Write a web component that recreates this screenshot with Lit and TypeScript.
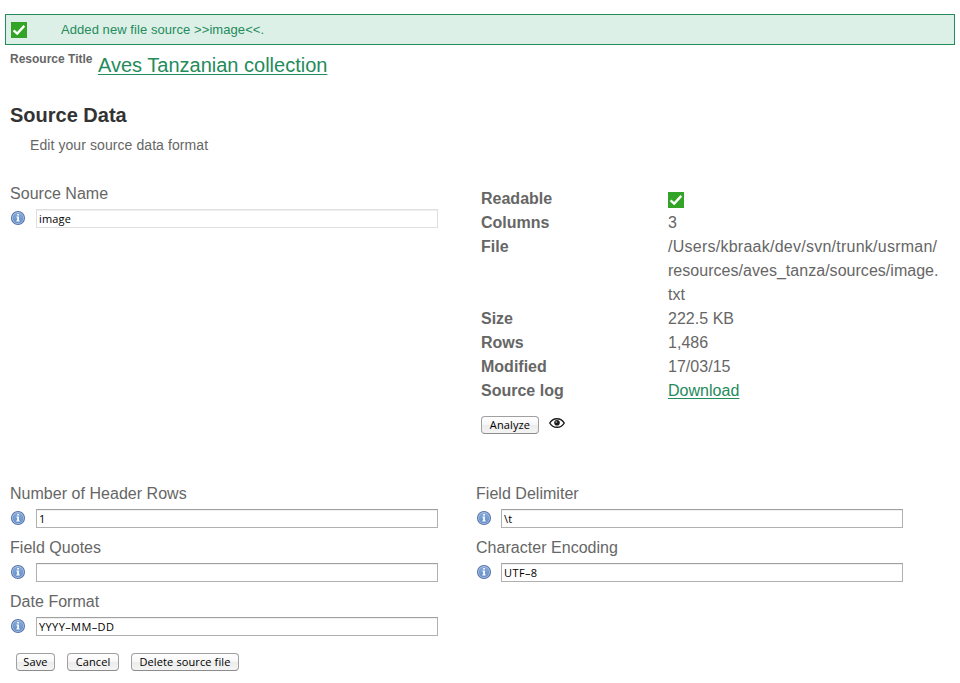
import { LitElement, html, css } from "lit";
import { customElement, property } from "lit/decorators.js";

@customElement("check-icon")
class CheckIcon extends LitElement {
  static styles = css`
    :host { display: block; width: 16px; height: 16px; flex: none; }
    svg { display: block; }
  `;
  render() {
    return html`<svg width="16" height="16" viewBox="0 0 16 16">
      <rect width="16" height="16" fill="#33a428" />
      <path d="M2.6 8.3 L6.2 11.6 L13.3 3.9" fill="none" stroke="#fff" stroke-width="2.3" />
    </svg>`;
  }
}

@customElement("info-icon")
class InfoIcon extends LitElement {
  static styles = css`
    :host { display: block; width: 16px; height: 16px; flex: none; }
    svg { display: block; }
  `;
  render() {
    return html`<svg width="16" height="16" viewBox="0 0 16 16">
      <defs>
        <linearGradient id="g" x1="0" y1="0" x2="0" y2="1">
          <stop offset="0" stop-color="#86a9d8" />
          <stop offset="1" stop-color="#6590cb" />
        </linearGradient>
      </defs>
      <circle cx="8" cy="8" r="6.5" fill="#b4c9e6" stroke="#5874ab" stroke-width="1.1" />
      <circle cx="8" cy="8" r="5.3" fill="url(#g)" />
      <path d="M7.2 4h1.7v1.5H7.2z M6.4 6.5h2.5v3.9h.8v1H6.3v-1h.9V7.5h-.8z" fill="#fff" />
    </svg>`;
  }
}

@customElement("form-field")
class FormField extends LitElement {
  @property() label = "";
  @property() value = "";
  @property({ type: Boolean }) muted = false;

  static styles = css`
    :host { display: block; height: 54px; --gap: 10px; }
    .label { display: block; font-size: 16px; line-height: 24px; color: #666; letter-spacing: .03px; }
    .row { display: flex; align-items: flex-start; gap: var(--field-gap, 10px); padding-top: 3px; }
    .icon { margin-top: 1px; }
    .box {
      box-sizing: border-box; width: 402px; height: 19px; margin: 0; padding: 0 2px 1px;
      border: 1px solid #b0b0b0; border-top-color: #a0a0a0; border-radius: 0; background: #fff;
      font: 500 11px/16px "Open Sans", "Noto Sans", sans-serif; letter-spacing: .18px; color: #000; outline: none;
      box-shadow: inset 0 1px 0 #f0f0f0;
    }
    .caps { letter-spacing: .4px; }
    .muted { border-color: #dfdfdf; }
  `;
  render() {
    const caps = this.value !== "" && this.value === this.value.toUpperCase();
    return html`
      <label class="label">${this.label}</label>
      <div class="row">
        <info-icon class="icon"></info-icon>
        <input class="box ${this.muted ? "muted" : ""} ${caps ? "caps" : ""}" .value=${this.value} />
      </div>`;
  }
}

@customElement("app-root")
class AppRoot extends LitElement {
  static styles = css`
    :host {
      display: block; box-sizing: border-box; width: 960px; height: 683px; padding-top: 14px;
      overflow: hidden; background: #fff; color: #666;
      font-family: "Liberation Sans", Arial, sans-serif;
    }
    a { color: #248b5b; text-decoration: underline; text-decoration-thickness: 1px; text-underline-offset: 2px; }
    .notice {
      box-sizing: border-box; height: 31px; margin: 0 5px; padding-left: 5px;
      display: flex; align-items: center; gap: 34px; letter-spacing: .07px;
      border: 1px solid #248b5b; background: #ddf0e7; color: #248b5b; font-size: 13px;
    }
    .resource { display: flex; align-items: flex-start; gap: 5.5px; height: 55px; padding-left: 10px; white-space: nowrap; }
    .caption { font-size: 12px; font-weight: bold; line-height: 14px; padding-top: 7px; }
    .title { font-size: 20px; line-height: 24px; padding-top: 8px; }
    .heading { margin: 0; padding-left: 10px; font-size: 20px; line-height: 30px; color: #333; }
    .intro { margin: 0; padding-left: 30px; font-size: 14px; line-height: 30px; height: 52px; letter-spacing: .08px; }
    .summary { display: grid; grid-template-columns: 471px 1fr; padding-left: 10px; height: 300px; }
    .facts { display: grid; grid-template-columns: 187px 280px; margin: 5px 0 13px; font-size: 16px; line-height: 24px; }
    .facts dt { font-weight: bold; }
    .facts dd { margin: 0; white-space: nowrap; letter-spacing: .03px; }
    .path { letter-spacing: .25px; }
    .check { margin-top: 5px; }
    .tools { display: flex; gap: 10px; }
    .btn {
      box-sizing: border-box; height: 18px; padding: 0 0 1px; border: 1px solid #a0a0a0; border-bottom-color: #8c8c8c;
      border-radius: 4px; background: linear-gradient(#fff, #f6f6f6 50%, #ececec 51%, #f4f4f4);
      font: 500 11px/15px "Open Sans", "Noto Sans", sans-serif; letter-spacing: .12px; color: #000; white-space: nowrap;
    }
    .analyze { width: 58px; }
    .save { width: 39px; }
    .cancel { width: 52px; }
    .delete { width: 108px; }
    .fields { display: grid; grid-template-columns: 466px 1fr; padding-left: 10px; grid-auto-rows: 54px; }
    .right { --field-gap: 9px; }
    .actions { display: flex; gap: 12px; padding: 9px 0 0 16px; }
    .eye { display: block; margin-top: 1px; }
  `;

  private facts: [string, unknown][] = [
    ["Readable", html`<check-icon class="check"></check-icon>`],
    ["Columns", "3"],
    ["File", html`<span class="path">/Users/kbraak/dev/svn/trunk/usrman/</span><br />resources/aves_tanza/sources/image.<br />txt`],
    ["Size", "222.5 KB"],
    ["Rows", "1,486"],
    ["Modified", "17/03/15"],
    ["Source log", html`<a href="#">Download</a>`],
  ];

  render() {
    return html`
      <div class="notice"><check-icon></check-icon><span>Added new file source &gt;&gt;image&lt;&lt;.</span></div>
      <div class="resource">
        <span class="caption">Resource Title</span>
        <a class="title" href="#">Aves Tanzanian collection</a>
      </div>
      <h1 class="heading">Source Data</h1>
      <p class="intro">Edit your source data format</p>
      <section class="summary">
        <form-field label="Source Name" value="image" muted></form-field>
        <div>
          <dl class="facts">${this.facts.map(([k, v]) => html`<dt>${k}</dt><dd>${v}</dd>`)}</dl>
          <div class="tools">
            <button class="btn analyze">Analyze</button>
            <svg class="eye" width="16" height="12" viewBox="0 0 16 12">
              <path d="M.8 6 C3.8 .3 12.2 .3 15.2 6 C12.2 11.7 3.8 11.7 .8 6Z" fill="#fff" stroke="#1c1c1c" stroke-width="1.5" />
              <circle cx="8" cy="5.8" r="2.8" fill="#1c1c1c" />
              <circle cx="7.3" cy="5" r="1" fill="#888" />
            </svg>
          </div>
        </div>
      </section>
      <section class="fields">
        <form-field label="Number of Header Rows" value="1"></form-field>
        <form-field class="right" label="Field Delimiter" value="\\t"></form-field>
        <form-field label="Field Quotes"></form-field>
        <form-field class="right" label="Character Encoding" value="UTF–8"></form-field>
        <form-field label="Date Format" value="YYYY–MM–DD"></form-field>
      </section>
      <div class="actions">
        <button class="btn save">Save</button>
        <button class="btn cancel">Cancel</button>
        <button class="btn delete">Delete source file</button>
      </div>`;
  }
}
